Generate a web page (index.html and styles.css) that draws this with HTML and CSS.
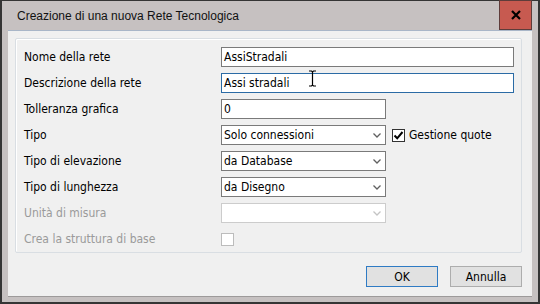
FILE: index.html
```html
<!DOCTYPE html>
<html lang="it">
<head>
    <meta charset="UTF-8">
    <title>Creazione di una nuova Rete Tecnologica</title>
    <link rel="stylesheet" href="styles.css">
</head>
<body>

    <div class="window">
        <div class="titlebar">
            <span class="title">Creazione di una nuova Rete Tecnologica</span>
            <div class="close">
                <svg width="12" height="10" viewBox="0 0 12 10">
                    <path d="M2 1 L10 9 M10 1 L2 9" stroke="#000" stroke-width="2.2" fill="none"/>
                </svg>
            </div>
        </div>

        <div class="content">
            <div class="group">
                <div class="form">
                    <label class="lbl">Nome della rete</label>
                    <div class="field wide">AssiStradali</div>

                    <label class="lbl">Descrizione della rete</label>
                    <div class="field wide focus">Assi stradali</div>

                    <label class="lbl">Tolleranza grafica</label>
                    <div class="field">0</div>
                    <div></div>

                    <label class="lbl">Tipo</label>
                    <div class="field combo">
                        <span>Solo connessioni</span>
                        <svg class="chev" width="8" height="5" viewBox="0 0 8 5"><path d="M0.5 0.5 L4 4 L7.5 0.5" stroke="#606060" stroke-width="1.3" fill="none"/></svg>
                    </div>
                    <div class="check-wrap">
                        <span class="check on">
                            <svg width="11" height="11" viewBox="0 0 11 11"><path d="M1.5 5.5 L4.2 8.3 L9.5 2" stroke="#000" stroke-width="2" fill="none"/></svg>
                        </span>
                        <span>Gestione quote</span>
                    </div>

                    <label class="lbl">Tipo di elevazione</label>
                    <div class="field combo">
                        <span>da Database</span>
                        <svg class="chev" width="8" height="5" viewBox="0 0 8 5"><path d="M0.5 0.5 L4 4 L7.5 0.5" stroke="#606060" stroke-width="1.3" fill="none"/></svg>
                    </div>
                    <div></div>

                    <label class="lbl">Tipo di lunghezza</label>
                    <div class="field combo">
                        <span>da Disegno</span>
                        <svg class="chev" width="8" height="5" viewBox="0 0 8 5"><path d="M0.5 0.5 L4 4 L7.5 0.5" stroke="#606060" stroke-width="1.3" fill="none"/></svg>
                    </div>
                    <div></div>

                    <label class="lbl disabled">Unità di misura</label>
                    <div class="field combo off">
                        <span></span>
                        <svg class="chev" width="8" height="5" viewBox="0 0 8 5"><path d="M0.5 0.5 L4 4 L7.5 0.5" stroke="#c4c4c4" stroke-width="1.3" fill="none"/></svg>
                    </div>
                    <div></div>

                    <label class="lbl disabled">Crea la struttura di base</label>
                    <div class="check-wrap"><span class="check off"></span></div>
                    <div></div>
                </div>
            </div>

            <div class="buttons">
                <button class="btn default">OK</button>
                <button class="btn">Annulla</button>
            </div>
        </div>

        <svg class="ibeam" width="9" height="17" viewBox="0 0 9 17">
            <path d="M1 1 H3.5 L4.5 2 L5.5 1 H8 M4.5 2 V15 M1 16 H3.5 L4.5 15 L5.5 16 H8" stroke="#000" stroke-width="1.2" fill="none"/>
        </svg>
    </div>

</body>
</html>
```

FILE: styles.css
```css
body {
    margin: 0;
    padding: 0;
    background-color: #2f2f2f;
}
.window {
    position: relative;
    width: 540px;
    height: 304px;
    box-sizing: border-box;
    background-color: #c6c1c1;
    border: 2px solid #353535;
    border-top-width: 1px;
    display: flex;
    flex-direction: column;
    font-family: 'Liberation Sans Narrow', 'DejaVu Sans Condensed', 'Liberation Sans', sans-serif;
    font-size: 12px;
    color: #000;
}
.titlebar {
    height: 29px;
    display: flex;
    align-items: center;
    justify-content: space-between;
    padding-left: 15px;
    padding-right: 6px;
}
.title {
    font-family: 'Liberation Sans', sans-serif;
    font-size: 12px;
    color: #111;
}
.close {
    width: 31px;
    height: 28px;
    margin-top: -1px;
    background-color: #c75a50;
    border: 1px solid #5e3c3a;
    display: flex;
    align-items: center;
    justify-content: center;
}
.content {
    flex: 1;
    margin: 0 6px 6px 6px;
    background-color: #f0f0f0;
    border-top: 1px solid #a9b6c8;
    box-shadow: 0 1px 0 #9d9a9a;
    display: flex;
    flex-direction: column;
    padding: 7px 10px 0 7px;
}
.group {
    border: 1px solid #d9dee3;
    border-radius: 2px;
    box-shadow: inset 1px 1px 0 #fff;
    padding: 8px 0 3px 7px;
}
.form {
    display: grid;
    grid-template-columns: 198px 165px 1fr;
    grid-auto-rows: 20px;
    row-gap: 6px;
}
.lbl {
    display: flex;
    align-items: center;
    padding-left: 1px;
}
.lbl.disabled {
    color: #9a9a9a;
}
.field {
    box-sizing: border-box;
    height: 20px;
    background-color: #fff;
    border: 1px solid #7a7a7a;
    padding: 0 2px;
    display: flex;
    align-items: center;
}
.field.wide {
    grid-column: span 2;
    width: 293px;
}
.field.focus {
    border-color: #2b6ba5;
}
.combo {
    justify-content: space-between;
    padding-right: 4px;
}
.combo.off {
    border-color: #cccccc;
}
.chev {
    margin-top: 1px;
}
.check-wrap {
    display: flex;
    align-items: center;
    gap: 4px;
    padding-left: 6px;
}
.form > .check-wrap:nth-last-child(2) {
    padding-left: 0;
}
.check {
    box-sizing: border-box;
    width: 13px;
    height: 13px;
    background-color: #fff;
    border: 1px solid #333;
    display: flex;
    align-items: center;
    justify-content: center;
}
.check.off {
    border-color: #bcbcbc;
}
.buttons {
    display: flex;
    justify-content: flex-end;
    gap: 12px;
    margin-top: 13px;
}
.btn {
    box-sizing: border-box;
    width: 72px;
    height: 21px;
    background-color: #e1e1e1;
    border: 1px solid #adadad;
    font-family: inherit;
    font-size: 12px;
    color: #000;
    padding: 0;
}
.btn.default {
    border-color: #2f7bc4;
}
.ibeam {
    position: absolute;
    left: 306px;
    top: 69px;
}
```
